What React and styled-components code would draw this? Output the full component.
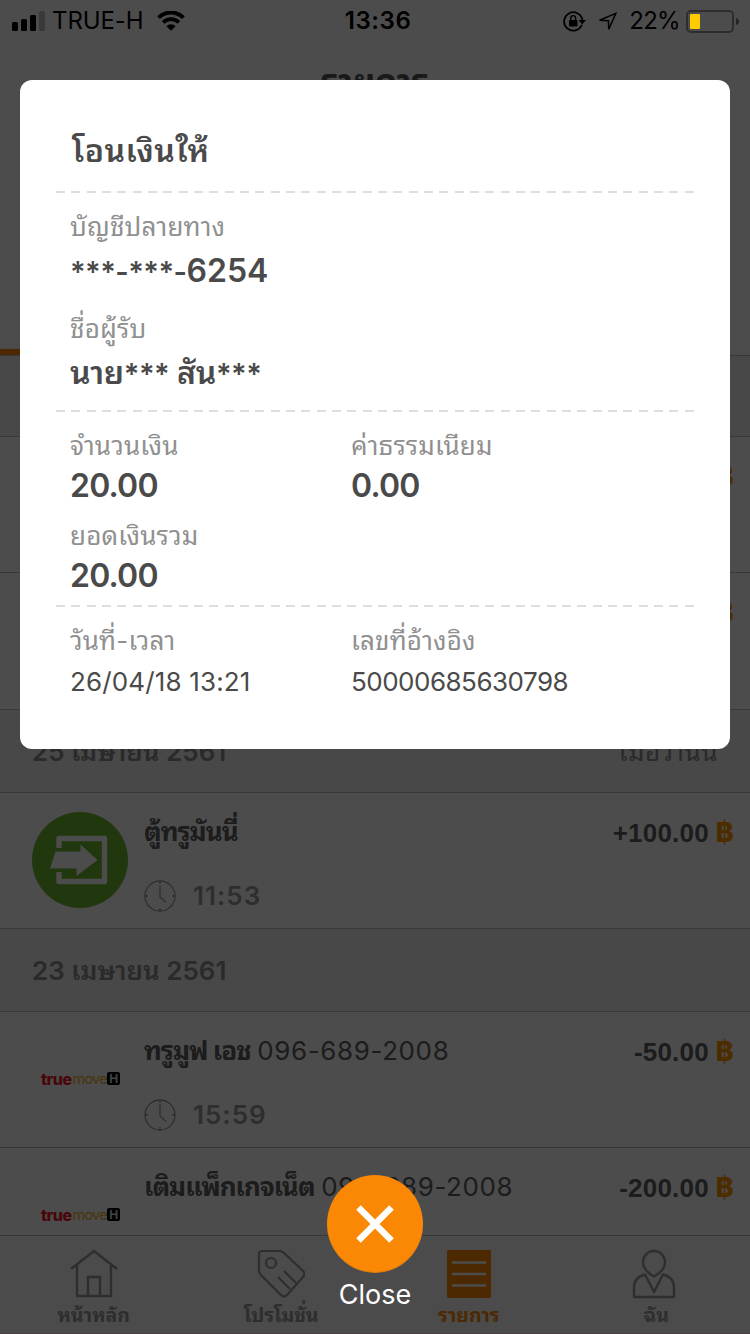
import styled, { createGlobalStyle, css } from "styled-components";

const GlobalStyle = createGlobalStyle`
  * {
    box-sizing: border-box;
    margin: 0;
    padding: 0;
  }
  body {
    width: 750px;
    height: 1334px;
    overflow: hidden;
    background: #fff;
    font-family: Inter, "Noto Sans Thai Looped", Loma, Garuda, Waree, "Noto Sans", sans-serif;
  }
`;

const Screen = styled.div`
  position: relative;
  display: flex;
  flex-direction: column;
  width: 750px;
  height: 1334px;
  overflow: hidden;
  background: #fff;
`;

const StatusBar = styled.div`
  position: relative;
  z-index: 1;
  display: grid;
  grid-template-columns: 1fr auto 1fr;
  align-items: center;
  height: 40px;
  padding: 0 11px 0 12px;
  color: #000;
  font-size: 24px;
  line-height: 42px;
`;

const StatusSide = styled.div`
  display: flex;
  align-items: center;
  justify-content: ${({ $end }) => ($end ? "flex-end" : "flex-start")};
  height: 40px;
  svg {
    flex: none;
  }
`;

const Carrier = styled.span`
  margin: 0 13px 0 7px;
  letter-spacing: -0.1px;
`;

const Clock = styled.div`
  padding-left: 5px;
  font-weight: 600;
  letter-spacing: 0.6px;
`;

const Percent = styled.span`
  margin: 0 6px 0 11px;
  letter-spacing: -0.7px;
`;

const LocationSlot = styled.span`
  display: flex;
  margin-left: 12px;
`;

const NavBar = styled.div`
  height: 185px;
  padding-top: 20px;
  color: #555;
  font-size: 34px;
  font-weight: 700;
  line-height: 44px;
  text-align: center;
`;

const Tabs = styled.div`
  display: flex;
  height: 131px;
  background: #fafafa;
  border-bottom: 1px solid #bbb;
`;

const Tab = styled.div`
  flex: 1;
  border-bottom: 6px solid ${({ $active }) => ($active ? "#ff8a00" : "transparent")};
`;

const DateHeader = styled.div`
  display: flex;
  justify-content: space-between;
  flex: none;
  height: ${({ $h }) => $h || 83}px;
  padding: 24px 32px 0;
  background: #f0f0f0;
  border-bottom: 1px solid #bbb;
  color: #8c8c8c;
  font-size: 26px;
  font-weight: 600;
  line-height: 35px;
`;

const DateText = styled.span`
  letter-spacing: 0.02px;
`;

const DateNote = styled.span`
  font-weight: 400;
  letter-spacing: 0.5px;
`;

const Row = styled.div`
  display: flex;
  flex: none;
  height: ${({ $h }) => $h || 136}px;
  padding: 0 16px 0 32px;
  border-bottom: 1px solid #bbb;
`;

const Thumb = styled.div`
  display: flex;
  align-items: center;
  justify-content: center;
  width: 96px;
  height: 134px;
`;

const Logo = styled.div`
  display: flex;
  align-items: center;
  width: 78px;
  margin-bottom: 1px;
  font-size: 14.5px;
  line-height: 14px;
  letter-spacing: -0.8px;
`;

const True = styled.b`
  color: #f0141e;
  font-weight: 800;
  font-size: 16px;
  letter-spacing: -0.5px;
`;

const Move = styled.span`
  margin-left: 1px;
  color: #f0b020;
`;

const LogoH = styled.span`
  flex: none;
  width: 13px;
  height: 13px;
  margin-left: auto;
  border-radius: 2px;
  background: #000;
  color: #ddd;
  font-size: 12px;
  font-weight: 700;
  line-height: 13px;
  text-align: center;
`;

const Info = styled.div`
  flex: 1;
  padding: 21px 0 0 16px;
`;

const Name = styled.div`
  color: #606060;
  font-size: 26px;
  font-weight: 700;
  line-height: 36px;
  letter-spacing: -0.95px;
  white-space: nowrap;
`;

const Phone = styled.span`
  margin-left: 1.5px;
  font-weight: 400;
  letter-spacing: 0.6px;
`;

const Time = styled.div`
  display: flex;
  align-items: center;
  gap: 17px;
  height: 36px;
  margin-top: 28px;
  color: #999;
  font-size: 26px;
  font-weight: 600;
  line-height: 38px;
  letter-spacing: 1px;
`;

const Amount = styled.div`
  display: flex;
  padding-top: 22px;
  color: #606060;
  font-family: "Liberation Sans", sans-serif;
  font-size: 26px;
  font-weight: 700;
  line-height: 36px;
  letter-spacing: 0.2px;
`;

const Baht = styled.span`
  margin-left: 7px;
  color: #ff9600;
  font-family: Inter, sans-serif;
  font-size: 27px;
  font-weight: 800;
`;

const BottomBar = styled.div`
  position: absolute;
  left: 0;
  right: 0;
  bottom: 0;
  display: flex;
  height: 99px;
  background: #fafafa;
  border-top: 1px solid #bbb;
  border-bottom: 1px solid #ffd0d8;
`;

const BottomItem = styled.div`
  flex: 1;
  display: flex;
  flex-direction: column;
  align-items: center;
  padding-top: 13px;
  color: ${({ $active }) => ($active ? "#ff8a00" : "#999")};
  font-size: 19.5px;
  font-weight: 700;
  line-height: 28px;
  svg {
    flex: none;
    margin-bottom: 3px;
  }
`;

const Overlay = styled.div`
  position: absolute;
  inset: 0;
  display: flex;
  flex-direction: column;
  align-items: center;
  padding-top: 80px;
  background: rgba(0, 0, 0, 0.7);
`;

const Card = styled.div`
  flex: none;
  width: 710px;
  height: 669px;
  padding: 51px 35px 0 36px;
  border-radius: 12px;
  background: #fff;
`;

const CardTitle = styled.h1`
  padding-left: 16px;
  color: #4a4a4a;
  font-size: 32px;
  font-weight: 600;
  line-height: 40px;
  letter-spacing: 0.5px;
`;

const Divider = styled.div`
  height: 2px;
  margin-top: ${({ $mt }) => $mt}px;
  background: repeating-linear-gradient(
    90deg,
    #dedede 0 9px,
    transparent 9px 15.33px
  );
`;

const Fields = styled.div`
  display: grid;
  grid-template-columns: 281px 1fr;
  padding-left: 14px;
`;

const Field = styled.div`
  margin-top: ${({ $mt }) => $mt}px;
`;

const Label = styled.div`
  height: 36px;
  color: #909090;
  font-size: 26px;
  line-height: 36px;
  letter-spacing: 0.18px;
  white-space: nowrap;
`;

const Value = styled.div`
  height: 40px;
  margin-top: ${({ $gap }) => $gap}px;
  color: #4a4a4a;
  font-size: 32px;
  font-weight: 600;
  line-height: 40px;
  letter-spacing: ${({ $ls }) => $ls || 0}px;
  white-space: nowrap;
  ${({ $light }) =>
    $light &&
    css`
      height: 36px;
      font-size: 26px;
      font-weight: 400;
      line-height: 36px;
    `}
`;

const Mask = styled.span`
  font-size: 29px;
  letter-spacing: -0.55px;
`;

const CloseButton = styled.button`
  display: flex;
  align-items: center;
  justify-content: center;
  flex: none;
  width: 96px;
  height: 98px;
  margin-top: 426px;
  border: 0;
  border-bottom: 1px solid #d87a14;
  border-radius: 50%;
  background: #fa8805;
`;

const CloseLabel = styled.div`
  margin-top: 4px;
  color: #fff;
  font-size: 27px;
  line-height: 36px;
`;

const SignalIcon = () => (
  <svg width="33" height="20" viewBox="0 0 33 20">
    <rect x="0" y="11" width="6" height="9" rx="1.5" />
    <rect x="9" y="8" width="6" height="12" rx="1.5" />
    <rect x="18" y="4" width="6" height="16" rx="1.5" />
    <rect x="27" y="0" width="6" height="20" rx="1.5" opacity="0.25" />
  </svg>
);

const WifiIcon = () => (
  <svg width="28" height="20" viewBox="0 0 28 20">
    <path d="M1.6 6.6a17.5 17.5 0 0 1 24.8 0" fill="none" stroke="#000" strokeWidth="4" />
    <path d="M6.2 11.4a11 11 0 0 1 15.6 0" fill="none" stroke="#000" strokeWidth="3.6" />
    <path d="M9.4 15.2a6.6 6.6 0 0 1 9.2 0L14 19.8z" />
  </svg>
);

const LockIcon = () => (
  <svg width="23" height="21" viewBox="0 0 23 21">
    <path d="M18.9 13.8A9.2 9.2 0 1 1 19.4 9" fill="none" stroke="#000" strokeWidth="1.8" />
    <path d="M15.6 9h7.4l-3.7 4.3z" />
    <rect x="6" y="9" width="8.4" height="6.4" rx="0.8" />
    <path d="M7.8 9.4V7.2a2.4 2.6 0 0 1 4.8 0v2.2" fill="none" stroke="#000" strokeWidth="1.4" />
  </svg>
);

const LocationIcon = () => (
  <svg width="20" height="19" viewBox="0 0 20 19">
    <path d="M17.8 1.4 1.600 8.200l8.800 0.600 0.400 8.300z" fill="none" stroke="#000" strokeWidth="1.5" />
  </svg>
);

const BatteryIcon = () => (
  <svg width="53" height="23" viewBox="0 0 53 23">
    <rect x="1" y="1" width="46" height="21" rx="4" fill="none" stroke="#000" strokeOpacity="0.4" strokeWidth="2" />
    <rect x="4" y="4" width="10" height="15" rx="1" fill="#fc0" />
    <path d="M50 8q3 1 3 3.5T50 15z" opacity="0.5" />
  </svg>
);

const CashInIcon = () => (
  <svg width="96" height="96" viewBox="0 0 96 96">
    <circle cx="48" cy="48" r="48" fill="#71b92c" />
    <path d="M27 36V26.5h45.5v43H27V60" fill="none" stroke="#fff" strokeWidth="5.4" strokeLinejoin="round" />
    <path d="M23.500 39.500H48.500V32.500L65.500 48 44.500 64V56.500H18z" fill="#fff" />
  </svg>
);

const ClockIcon = () => (
  <svg width="32" height="32" viewBox="0 0 32 32" fill="none" stroke="#999" strokeWidth="1.3">
    <circle cx="16" cy="16" r="15" />
    <path d="M16 5.500V17l6 5.500M16 1v3M16 28v3M1 16h3M28 16h3" />
  </svg>
);

const HomeIcon = () => (
  <svg width="48" height="49" viewBox="0 0 48 49" fill="none" stroke="currentColor" strokeWidth="2.4">
    <path d="M1 20 24 2l23 18M7 16v31h34V16M18 47V28h12v19" />
  </svg>
);

const TagIcon = () => (
  <svg width="48" height="49" viewBox="-1 -1 48 49" fill="none" stroke="currentColor" strokeWidth="2.2" strokeLinejoin="round">
    <path d="M1 4Q1 1 4 1h18q2 0 4 2l19 18q3 3 0 6L29 45q-3 3-6 0L3 25q-2-2-2-4z" />
    <circle cx="13" cy="13" r="5" />
    <path d="M20 27 32 39M26 21l12 12" />
  </svg>
);

const ListIcon = () => (
  <svg width="44" height="49" viewBox="0 0 44 49">
    <rect y="1" width="44" height="48" rx="1" fill="currentColor" />
    <path d="M6 13.500h32M6 25h32M6 36.500h32" stroke="#fff" strokeWidth="2.6" strokeLinecap="round" />
  </svg>
);

const PersonIcon = () => (
  <svg width="44" height="49" viewBox="2 -1 44 49" fill="none" stroke="currentColor" strokeWidth="2.4" strokeLinejoin="round" overflow="visible">
    <path d="M22 26.500C14 22 11 17 11 12S15 1 22 1s11 6 11 11-3 10-11 14.500z" />
    <path d="M13 24.500 22 42l9-17.500c8 2 11 6 11 13V47H2v-9.500c0-7 3-11 11-13z" />
  </svg>
);

const TrueMoveLogo = () => (
  <Logo>
    <True>true</True>
    <Move>move</Move>
    <LogoH>H</LogoH>
  </Logo>
);

const Transaction = ({ icon, name, phone, time, amount, height }) => (
  <Row $h={height}>
    <Thumb>{icon}</Thumb>
    <Info>
      <Name>
        {name} {phone && <Phone>{phone}</Phone>}
      </Name>
      {time && (
        <Time>
          <ClockIcon />
          {time}
        </Time>
      )}
    </Info>
    <Amount>
      {amount}
      <Baht>฿</Baht>
    </Amount>
  </Row>
);

export default function App() {
  return (
    <>
      <GlobalStyle />
      <Screen>
        <StatusBar>
          <StatusSide>
            <SignalIcon />
            <Carrier>TRUE-H</Carrier>
            <WifiIcon />
          </StatusSide>
          <Clock>13:36</Clock>
          <StatusSide $end>
            <LockIcon />
            <LocationSlot>
              <LocationIcon />
            </LocationSlot>
            <Percent>22%</Percent>
            <BatteryIcon />
          </StatusSide>
        </StatusBar>
        <NavBar>รายการ</NavBar>
        <Tabs>
          <Tab $active />
          <Tab />
          <Tab />
        </Tabs>
        <DateHeader $h={81} />
        <Transaction height={136} />
        <Transaction height={137} />
        <DateHeader>
          <DateText>25 เมษายน 2561</DateText>
          <DateNote>เมื่อวานนี้</DateNote>
        </DateHeader>
        <Transaction icon={<CashInIcon />} name="ตู้ทรูมันนี่" time="11:53" amount="+100.00" />
        <DateHeader>
          <DateText>23 เมษายน 2561</DateText>
        </DateHeader>
        <Transaction icon={<TrueMoveLogo />} name="ทรูมูฟ เอช" phone="096-689-2008" time="15:59" amount="-50.00" />
        <Transaction icon={<TrueMoveLogo />} name="เติมแพ็กเกจเน็ต" phone="096-689-2008" amount="-200.00" />
        <BottomBar>
          <BottomItem>
            <HomeIcon />
            หน้าหลัก
          </BottomItem>
          <BottomItem>
            <TagIcon />
            โปรโมชั่น
          </BottomItem>
          <BottomItem $active>
            <ListIcon />
            รายการ
          </BottomItem>
          <BottomItem>
            <PersonIcon />
            ฉัน
          </BottomItem>
        </BottomBar>
        <Overlay>
          <Card>
            <CardTitle>โอนเงินให้</CardTitle>
            <Divider $mt={20} />
            <Fields>
              <Field $mt={16}>
                <Label>บัญชีปลายทาง</Label>
                <Value $gap={6}>
                  <Mask>***-***-</Mask>6254
                </Value>
              </Field>
            </Fields>
            <Fields>
              <Field $mt={20}>
                <Label>ชื่อผู้รับ</Label>
                <Value $gap={6} $ls={-0.3}>
                  นาย<Mask>***</Mask> สัน<Mask>***</Mask>
                </Value>
              </Field>
            </Fields>
            <Divider $mt={17} />
            <Fields>
              <Field $mt={16}>
                <Label>จำนวนเงิน</Label>
                <Value $gap={2} $ls={-0.8}>20.00</Value>
              </Field>
              <Field $mt={16}>
                <Label>ค่าธรรมเนียม</Label>
                <Value $gap={2} $ls={-0.8}>0.00</Value>
              </Field>
              <Field $mt={12}>
                <Label>ยอดเงินรวม</Label>
                <Value $gap={2} $ls={-0.8}>20.00</Value>
              </Field>
            </Fields>
            <Divider $mt={9} />
            <Fields>
              <Field $mt={16}>
                <Label>วันที่-เวลา</Label>
                <Value $gap={5} $ls={0.15} $light>26/04/18 13:21</Value>
              </Field>
              <Field $mt={16}>
                <Label>เลขที่อ้างอิง</Label>
                <Value $gap={5} $ls={-0.5} $light>50000685630798</Value>
              </Field>
            </Fields>
          </Card>
          <CloseButton>
            <svg width="40" height="40" viewBox="0 0 40 40" stroke="#fff" strokeWidth="6.500">
              <path d="M3.500 3.500l33 33M36.500 3.500l-33 33" />
            </svg>
          </CloseButton>
          <CloseLabel>Close</CloseLabel>
        </Overlay>
      </Screen>
    </>
  );
}
